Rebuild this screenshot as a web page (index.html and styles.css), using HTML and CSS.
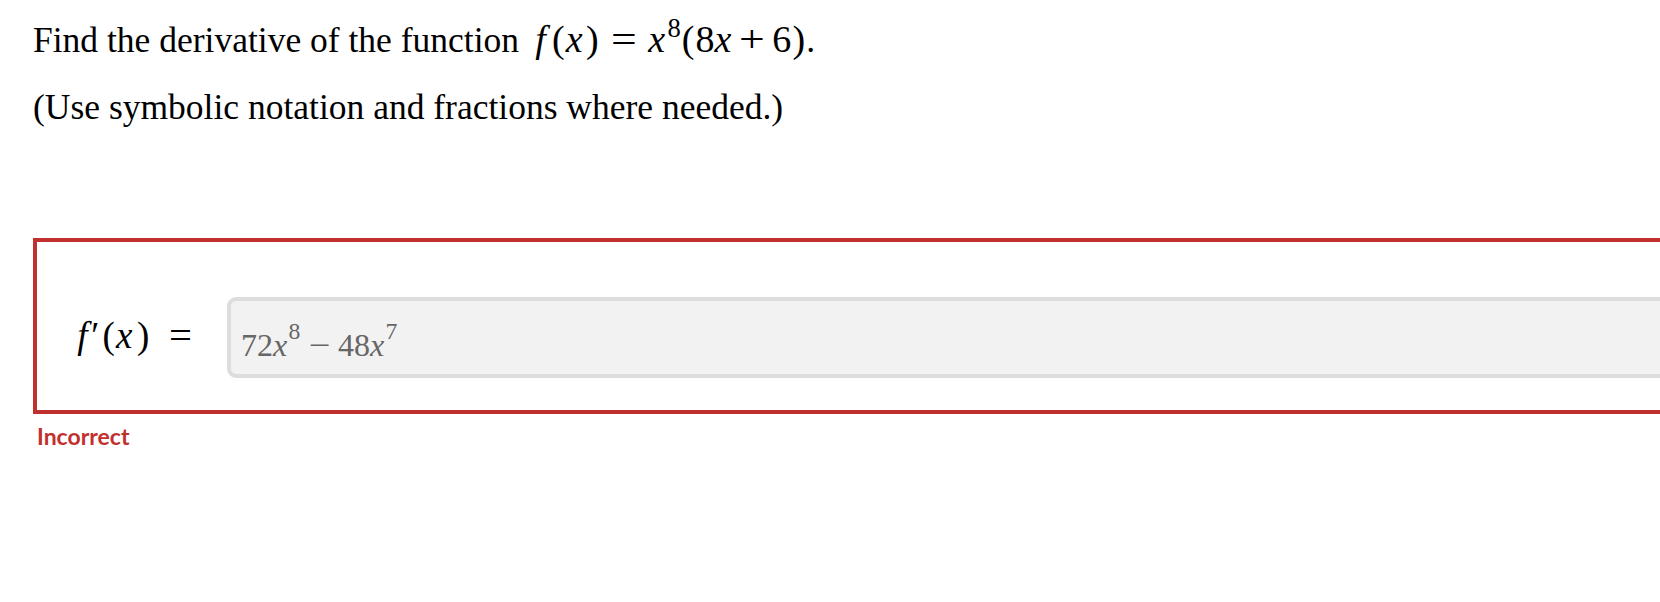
FILE: index.html
```html
<!DOCTYPE html>
<html>
<head>
<meta charset="utf-8">
<link rel="stylesheet" href="styles.css">
</head>
<body>
<div class="page">
  <p class="q">Find the derivative of the function <span class="m"><i class="f">f</i><span class="p">(</span><i class="x">x</i><span class="p">)</span><span class="op rel">=</span><i class="x">x</i><sup>8</sup><span class="p">(</span>8<i class="x">x</i><span class="op bin">+</span>6<span class="p">)</span></span>.</p>
  <p class="q">(Use symbolic notation and fractions where needed.)</p>

  <div class="answer-box">
    <div class="row">
      <span class="label m"><i class="f">f</i><span class="prime">′</span><span class="p">(</span><i class="x">x</i><span class="p">)</span><span class="op rel">=</span></span>
      <div class="input"><span class="val">72<i class="x">x</i><sup>8</sup><span class="op bin">−</span>48<i class="x">x</i><sup>7</sup></span></div>
    </div>
  </div>
  <div class="status">Incorrect</div>
</div>
</body>
</html>
```

FILE: styles.css
```css
html, body {
  margin: 0;
  padding: 0;
  background: #ffffff;
  overflow: hidden;
}

.page {
  padding: 18px 0 0 33px;
  font-family: "Liberation Serif", "Times New Roman", serif;
  color: #000;
  width: 1800px;
}

.q {
  margin: 0 0 25px 0;
  font-size: 35.5px;
  line-height: 42px;
  white-space: nowrap;
}

.q .m {
  font-size: 38px;
  margin-left: 5px;
}

i {
  font-style: italic;
}

i.f {
  padding-left: 0.06em;
  padding-right: 0.14em;
}

i.x {
  padding-right: 0.06em;
}

.p {
  display: inline-block;
  width: 0.389em;
  text-align: center;
}

.op {
  display: inline-block;
  width: 0.778em;
  text-align: center;
  transform: scaleX(1.2);
}

.op.rel {
  margin: 0 0.25em;
}

.op.bin {
  margin: 0 0.14em 0 0.1em;
}

sup {
  font-size: 0.7em;
  line-height: 0;
  vertical-align: 0.55em;
}

.answer-box {
  margin-top: 110px;
  border: 4px solid #c1302f;
  padding: 55px 0 32px 38px;
}

.row {
  display: flex;
  align-items: flex-start;
}

.label {
  font-size: 37px;
  line-height: 42px;
  margin-top: 18px;
  width: 152px;
  flex: none;
}

.label .prime {
  font-size: 1em;
  margin-left: -0.04em;
  margin-right: 0.06em;
}

.label i.x {
  padding-right: 0.1em;
}

.label .op.rel {
  margin-left: 0.41em;
  transform: scaleX(1.1);
}

.input {
  flex: 1;
  box-sizing: border-box;
  height: 81px;
  background: #f2f2f2;
  border: 4px solid #dddddd;
  border-radius: 9px;
  padding: 26px 10px 0 10px;
  color: #666666;
  font-size: 32px;
  line-height: 36px;
  white-space: nowrap;
}

.input sup {
  font-size: 0.74em;
  vertical-align: 0.7em;
}

.input i.x {
  padding-right: 0.04em;
}

.input .op.bin {
  margin: 0 0.2em;
}

.status {
  margin-top: 8px;
  padding-left: 4px;
  font-family: Lato, "Open Sans", sans-serif;
  font-weight: 700;
  font-size: 23px;
  line-height: 28px;
  color: #c1302f;
}
```
